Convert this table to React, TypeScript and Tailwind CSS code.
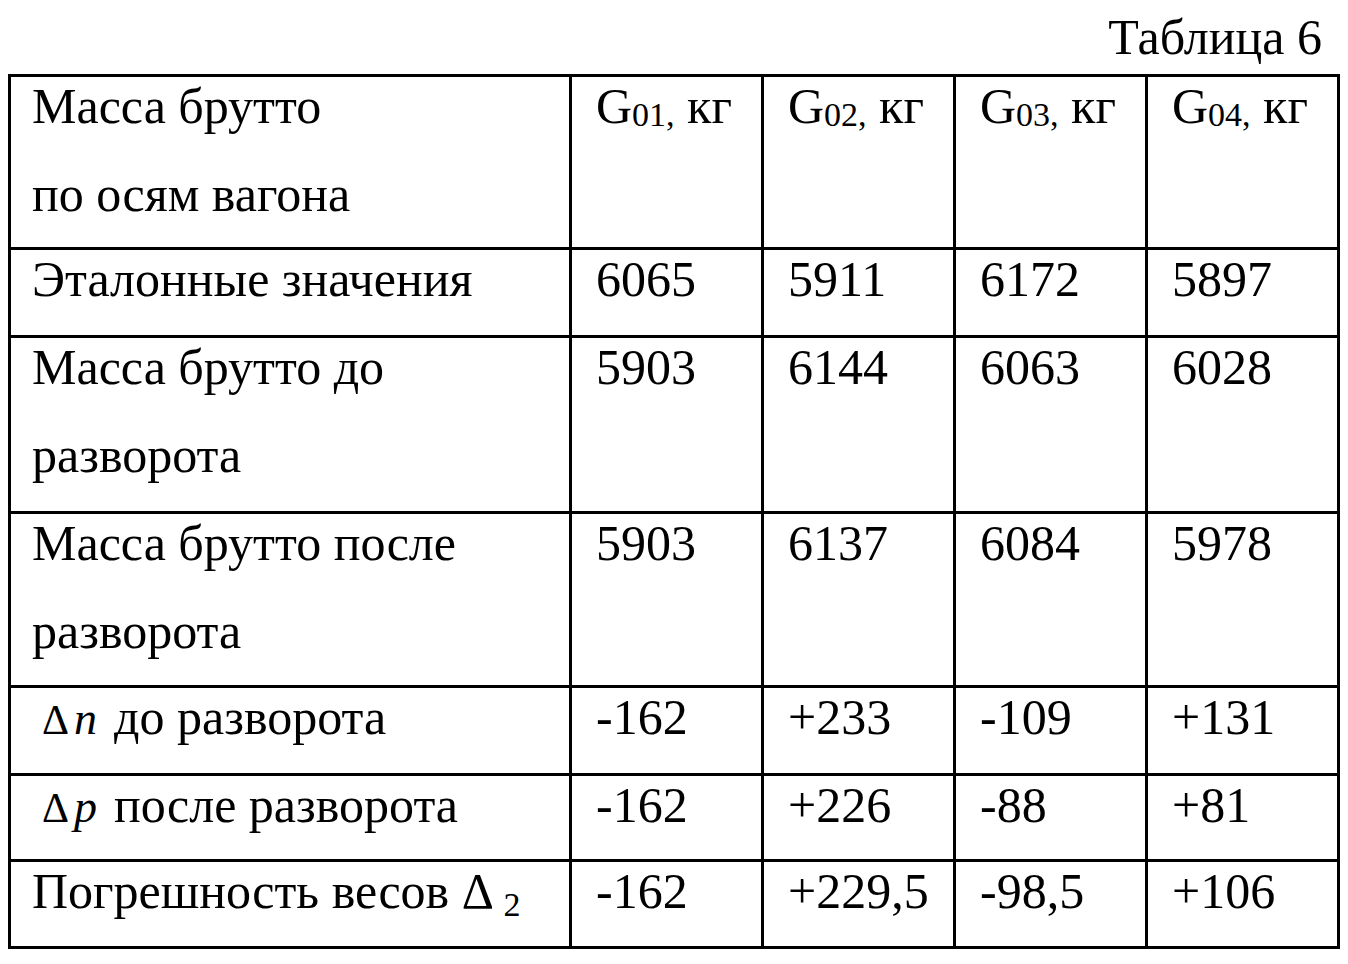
import React from "react";

const cellText = "-mt-[15px] leading-[88px] whitespace-pre";

function G({ n }: { n: string }) {
  return (
    <span>
      G<span className="text-[34px] align-[-3px]">{n},</span> кг
    </span>
  );
}

function Cell({ children, h }: { children: React.ReactNode; h: string }) {
  return (
    <div className={`bg-white pl-[21px] ${h} overflow-hidden`}>
      <div className={cellText}>{children}</div>
    </div>
  );
}

function NumCell({ children, h }: { children: React.ReactNode; h: string }) {
  return (
    <div className={`bg-white pl-[24px] ${h} overflow-hidden`}>
      <div className={cellText}>{children}</div>
    </div>
  );
}

function DeltaLabel({ v, rest }: { v: string; rest: string }) {
  return (
    <>
      <span className="inline-block ml-[10px] text-[42px]">Δ</span>
      <span className="inline-block ml-[5px] mr-[17px] italic text-[46px]">{v}</span>
      {rest}
    </>
  );
}

export default function App() {
  const rows: { label: React.ReactNode; vals: React.ReactNode[]; h: string }[] = [
    {
      label: (
        <>
          Масса брутто
          <br />
          по осям вагона
        </>
      ),
      vals: [<G n="01" />, <G n="02" />, <G n="03" />, <G n="04" />],
      h: "h-[170px]",
    },
    {
      label: "Эталонные значения",
      vals: ["6065", "5911", "6172", "5897"],
      h: "h-[85px]",
    },
    {
      label: (
        <>
          Масса брутто до
          <br />
          разворота
        </>
      ),
      vals: ["5903", "6144", "6063", "6028"],
      h: "h-[173px]",
    },
    {
      label: (
        <>
          Масса брутто после
          <br />
          разворота
        </>
      ),
      vals: ["5903", "6137", "6084", "5978"],
      h: "h-[171px]",
    },
    {
      label: <DeltaLabel v="n" rest="до разворота" />,
      vals: ["-162", "+233", "-109", "+131"],
      h: "h-[85px]",
    },
    {
      label: <DeltaLabel v="p" rest="после разворота" />,
      vals: ["-162", "+226", "-88", "+81"],
      h: "h-[83px]",
    },
    {
      label: (
        <>
          Погрешность весов Δ <span className="text-[34px] align-[-8px]">2</span>
        </>
      ),
      vals: ["-162", "+229,5", "-98,5", "+106"],
      h: "h-[84px]",
    },
  ];

  return (
    <div
      className="w-[1348px] h-[964px] bg-white text-black text-[50px]"
      style={{ fontFamily: '"Liberation Serif", "Times New Roman", serif' }}
    >
      <div className="h-[74px] leading-[74px] text-right pr-[26px]">Таблица 6</div>
      <div className="ml-[8px] w-[1332px] grid grid-cols-[558px_189px_189px_189px_189px] gap-[3px] bg-black p-[3px]">
        {rows.map((r, i) => (
          <React.Fragment key={i}>
            <Cell h={r.h}>{r.label}</Cell>
            {r.vals.map((v, j) => (
              <NumCell key={j} h={r.h}>
                {v}
              </NumCell>
            ))}
          </React.Fragment>
        ))}
      </div>
    </div>
  );
}
